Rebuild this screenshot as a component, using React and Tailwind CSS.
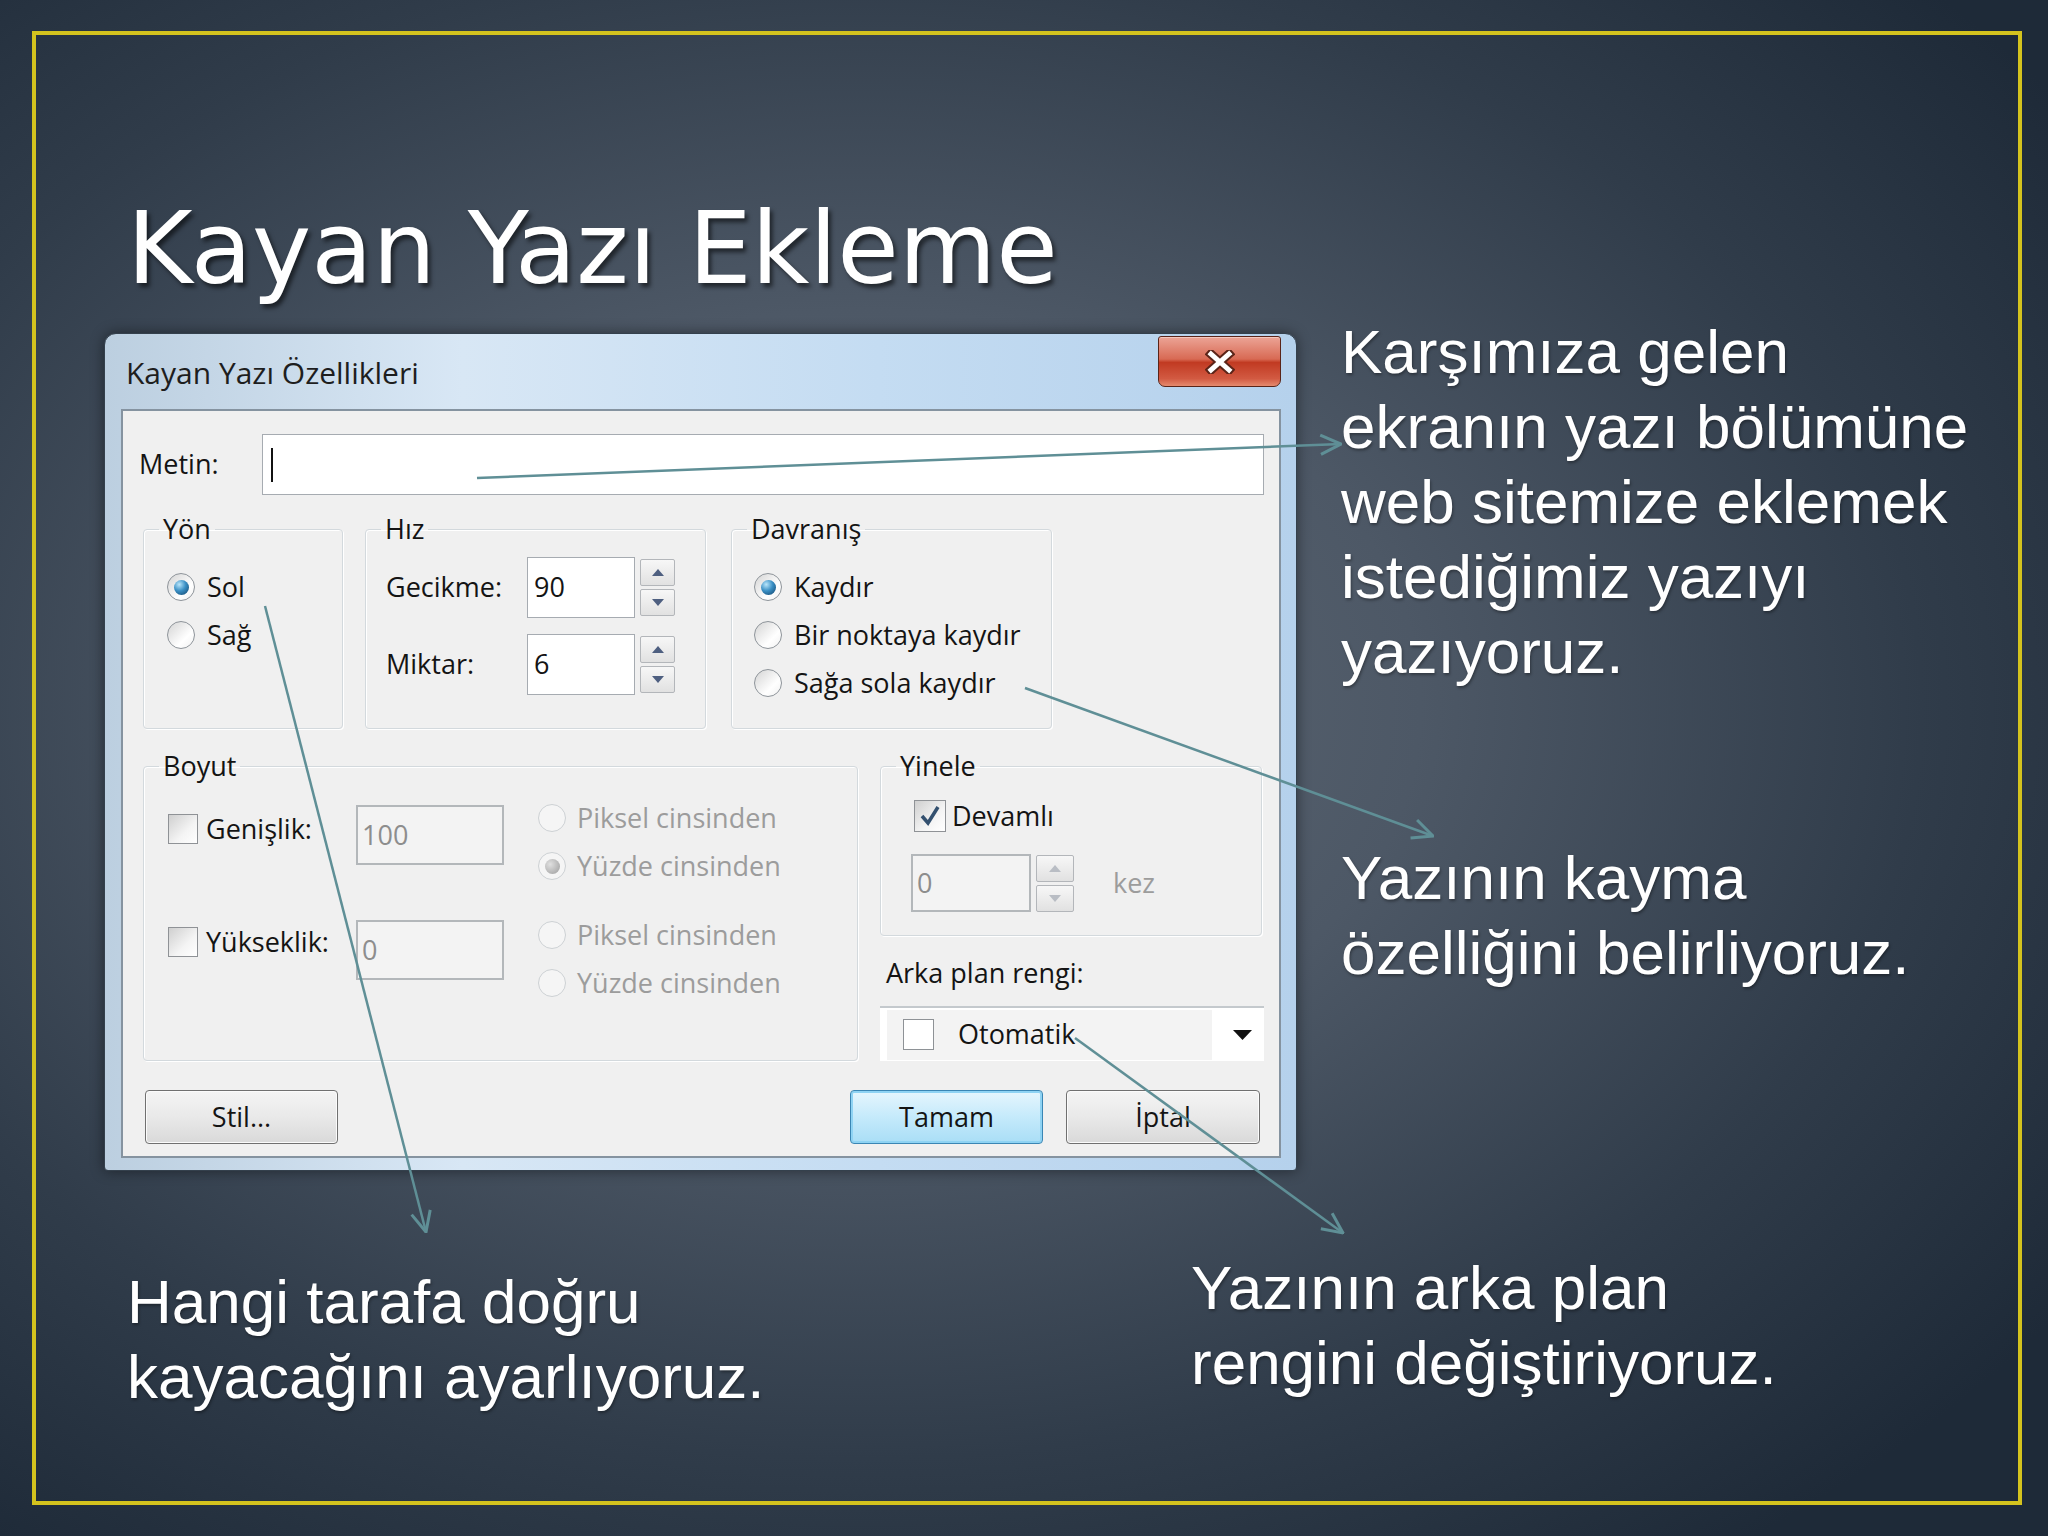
import React from "react";

const Radio = ({ label, checked, disabled, gap = "ml-[12px]" }) => (
  <div className="flex items-center h-[48px]">
    <span
      className={`w-[28px] h-[28px] rounded-full border flex items-center justify-center shrink-0 ${
        disabled
          ? "border-[#cdd1d4] bg-[#f5f5f5]"
          : "border-[#8e949a] bg-[linear-gradient(135deg,#d4d4d4,#ffffff_65%,#f0f0f0)]"
      }`}
    >
      {checked && (
        <span
          className={`w-[15px] h-[15px] rounded-full ${
            disabled
              ? "bg-[radial-gradient(circle_at_35%_35%,#e0e0e0,#9c9c9c)]"
              : "bg-[radial-gradient(circle_at_35%_30%,#b9e6fb,#3a8fc4_45%,#0f3f66)]"
          }`}
        />
      )}
    </span>
    <span className={`${gap} ${disabled ? "text-[#9c9c9c]" : "text-[#141414]"}`}>{label}</span>
  </div>
);

const Check = ({ checked, size = "w-[30px] h-[30px]" }) => (
  <span
    className={`${size} border border-[#8f9296] bg-[linear-gradient(135deg,#cfcfcf,#f4f4f4_60%,#ffffff)] flex items-center justify-center shrink-0`}
  >
    {checked && (
      <svg width="22" height="22" viewBox="0 0 22 22">
        <path d="M3 11 L9 18 L19 2" fill="none" stroke="#33506f" strokeWidth="3.5" />
      </svg>
    )}
  </span>
);

const Spinner = ({ w = "w-[35px]", disabled }) => (
  <div className="flex flex-col gap-[3px] ml-[5px]">
    {["M6 0 L12 7 L0 7 Z", "M0 0 L12 0 L6 7 Z"].map((d, i) => (
      <span
        key={i}
        className={`${w} h-[27px] border border-[#b3b6ba] rounded-[2px] bg-[linear-gradient(#f7f7f7,#e1e1e1)] flex items-center justify-center`}
      >
        <svg width="12" height="7" viewBox="0 0 12 7">
          <path d={d} fill={disabled ? "#b9bdc4" : "#4e5f80"} />
        </svg>
      </span>
    ))}
  </div>
);

// group box: legend sits on the top border, content padded inside
const Box = ({ title, className, inner, children }) => (
  <fieldset
    className={`border border-[#d3d9dd] rounded-[4px] shadow-[inset_1px_1px_0_#ffffff,1px_1px_0_#ffffff] ${className}`}
  >
    <legend className="ml-[15px] px-[4px] leading-[38px] text-[#141414]">{title}</legend>
    <div className={inner}>{children}</div>
  </fieldset>
);

const Btn = ({ children, primary, className = "" }) => (
  <div
    className={`h-[54px] rounded-[4px] border flex items-center justify-center ${
      primary
        ? "border-[#3a86b4] bg-[linear-gradient(#e6f6fd,#c5eafb_50%,#a9def6)] shadow-[inset_0_0_0_2px_#8fd3f3]"
        : "border-[#707070] bg-[linear-gradient(#f4f4f4,#e9e9e9_50%,#d9d9d9)] shadow-[inset_0_0_0_1px_#fbfbfb]"
    } ${className}`}
  >
    {children}
  </div>
);

const Dialog = () => (
  <div className="mt-[19px] ml-[68px] w-[1193px] h-[838px] rounded-t-[12px] rounded-b-[4px] border border-[#34404c] bg-[linear-gradient(90deg,#bccfe0,#d8e7f5_30%,#c4dcf2_65%,#b5d1ec)] flex flex-col shrink-0 shadow-[0_0_14px_rgba(0,0,0,0.45)] font-['Open_Sans',sans-serif] text-[27px] text-[#141414]">
    <div className="h-[75px] flex items-start shrink-0">
      <span className="ml-[21px] mt-[19px] text-[30px] leading-[40px] text-[#1e1e1e]">Kayan Yazı Özellikleri</span>
      <div className="ml-auto mr-[15px] mt-[2px] w-[123px] h-[51px] rounded-b-[7px] rounded-t-[3px] border border-[#5a2418] bg-[linear-gradient(#eca496,#d86a54_45%,#c13a22_52%,#d25a42_85%,#e58a6e)] flex items-center justify-center shadow-[inset_0_1px_0_#f5c7bd]">
        <svg width="30" height="24" viewBox="0 0 30 24">
          <path d="M6 4 L24 20 M24 4 L6 20" stroke="#5b2418" strokeWidth="9" strokeLinecap="square" />
          <path d="M6 4 L24 20 M24 4 L6 20" stroke="#ffffff" strokeWidth="5" strokeLinecap="square" />
        </svg>
      </div>
    </div>

    <div className="ml-[16px] w-[1160px] h-[749px] bg-[#f0f0f0] border-2 border-[#8593a0] flex flex-col">
      {/* metin */}
      <div className="mt-[23px] flex items-center">
        <span className="w-[139px] pl-[16px]">Metin:</span>
        <div className="w-[1002px] h-[61px] bg-white border border-[#a6abb1] flex items-center pl-[8px]">
          <span className="w-[2px] h-[34px] bg-[#111111]" />
        </div>
      </div>

      {/* row 1 */}
      <div className="mt-[15px] ml-[20px] flex items-start">
        <Box title="Yön" className="w-[200px] h-[219px]" inner="pl-[23px] pt-[15px]">
          <Radio label="Sol" checked />
          <Radio label="Sağ" />
        </Box>
        <Box title="Hız" className="ml-[22px] w-[341px] h-[219px]" inner="pl-[20px] pt-[9px] flex flex-col gap-[16px]">
          {[["Gecikme:", "90"], ["Miktar:", "6"]].map(([l, v]) => (
            <div key={l} className="flex items-center h-[61px]">
              <span className="w-[141px]">{l}</span>
              <div className="w-[108px] h-[61px] bg-white border border-[#a6abb1] flex items-center pl-[6px]">{v}</div>
              <Spinner />
            </div>
          ))}
        </Box>
        <Box title="Davranış" className="ml-[25px] w-[321px] h-[219px]" inner="pl-[22px] pt-[15px]">
          <Radio label="Kaydır" checked />
          <Radio label="Bir noktaya kaydır" />
          <Radio label="Sağa sola kaydır" />
        </Box>
      </div>

      {/* row 2 */}
      <div className="mt-[18px] ml-[20px] flex items-start">
        <Box title="Boyut" className="w-[715px] h-[314px]" inner="pl-[24px] pt-[9px]">
          {[
            ["Genişlik:", "100", true, "mt-[11px]", "mt-[11px]", ""],
            ["Yükseklik:", "0", false, "mt-[7px]", "mt-[9px]", "mt-[21px]"],
          ].map(([l, v, first, cm, im, rm]) => (
            <div key={l} className={`flex items-start ${rm}`}>
              <div className={`w-[188px] h-[48px] flex items-center ${cm}`}>
                <Check />
                <span className="ml-[8px]">{l}</span>
              </div>
              <div className={`w-[148px] h-[60px] border-2 border-[#b3b7ba] bg-[#f3f3f3] text-[#8d8d8d] flex items-center pl-[4px] ${im}`}>
                {v}
              </div>
              <div className="ml-[34px] flex flex-col">
                <Radio label="Piksel cinsinden" disabled gap="ml-[11px]" />
                <Radio label="Yüzde cinsinden" disabled checked={first} gap="ml-[11px]" />
              </div>
            </div>
          ))}
        </Box>

        <div className="ml-[22px] w-[384px] flex flex-col">
          <Box title="Yinele" className="w-[382px] h-[189px]" inner="pl-[30px] pt-[7px]">
            <div className="h-[48px] ml-[3px] flex items-center">
              <Check checked size="w-[32px] h-[32px]" />
              <span className="ml-[6px]">Devamlı</span>
            </div>
            <div className="mt-[14px] flex items-center">
              <div className="w-[120px] h-[58px] border-2 border-[#b3b7ba] bg-[#f3f3f3] text-[#8d8d8d] flex items-center pl-[4px]">0</div>
              <Spinner w="w-[38px]" disabled />
              <span className="ml-[39px] text-[#9c9c9c]">kez</span>
            </div>
          </Box>
          <span className="mt-[18px] pl-[6px] leading-[38px]">Arka plan rengi:</span>
          <div className="mt-[14px] w-[384px] h-[55px] bg-white border-t-2 border-[#c4c9cd] flex items-center">
            <div className="ml-[7px] w-[325px] h-[50px] bg-[#f3f3f3] flex items-center">
              <span className="ml-[16px] w-[31px] h-[31px] border border-[#8e9296] bg-white" />
              <span className="ml-[24px]">Otomatik</span>
            </div>
            <svg className="ml-[21px]" width="19" height="10" viewBox="0 0 19 10">
              <path d="M0 0 L19 0 L9.5 10 Z" fill="#111111" />
            </svg>
          </div>
        </div>
      </div>

      {/* buttons */}
      <div className="mt-[29px] pl-[22px] pr-[19px] flex items-center">
        <Btn className="w-[193px]">Stil...</Btn>
        <Btn primary className="ml-auto w-[193px]">Tamam</Btn>
        <Btn className="ml-[23px] w-[194px]">İptal</Btn>
      </div>
    </div>
  </div>
);

const Lines = ({ lines }) => (
  <div>
    {lines.map((t) => (
      <div key={t} className="whitespace-nowrap">{t}</div>
    ))}
  </div>
);

const Arrow = ({ x1, y1, x2, y2 }) => (
  <line x1={x1} y1={y1} x2={x2} y2={y2} stroke="#5f8f96" strokeWidth="2.5" markerEnd="url(#ah)" />
);

export default function App() {
  return (
    <div className="relative w-[2048px] h-[1536px] overflow-hidden pt-[31px] pl-[32px] bg-[radial-gradient(ellipse_72%_68%_at_42%_46%,#606a76_0%,#4d5866_38%,#303c4a_72%,#1e2a38_100%)]">
      <div className="w-[1990px] h-[1474px] border-4 border-[#d4c31e] flex flex-col">
        <h1 className="mt-[164px] ml-[91px] text-[100px] leading-[100px] text-white font-['DejaVu_Sans',sans-serif] [text-shadow:3px_4px_4px_rgba(0,0,0,0.55)]">
          Kayan Yazı Ekleme
        </h1>

        <div className="mt-[15px] flex items-start">
          <Dialog />
          <div className="ml-[44px] text-[62px] leading-[75px] text-white font-['Liberation_Sans',Arial,sans-serif] [text-shadow:1px_2px_3px_rgba(0,0,0,0.35)]">
            <Lines lines={["Karşımıza gelen", "ekranın yazı bölümüne", "web sitemize eklemek", "istediğimiz yazıyı", "yazıyoruz."]} />
            <div className="mt-[151px]">
              <Lines lines={["Yazının kayma", "özelliğini belirliyoruz."]} />
            </div>
          </div>
        </div>

        <div className="mt-[79px] flex items-start text-[62px] leading-[75px] text-white font-['Liberation_Sans',Arial,sans-serif] [text-shadow:1px_2px_3px_rgba(0,0,0,0.35)]">
          <div className="w-[1155px] pl-[91px] mt-[14px]">
            <Lines lines={["Hangi tarafa doğru", "kayacağını ayarlıyoruz."]} />
          </div>
          <Lines lines={["Yazının arka plan", "rengini değiştiriyoruz."]} />
        </div>
      </div>

      <svg className="absolute inset-0 pointer-events-none" width="2048" height="1536" viewBox="0 0 2048 1536">
        <defs>
          <marker id="ah" viewBox="0 0 20 20" refX="19" refY="10" markerWidth="24" markerHeight="24" markerUnits="userSpaceOnUse" orient="auto">
            <path d="M2 2 L19 10 L2 18" fill="none" stroke="#5f8f96" strokeWidth="2.5" />
          </marker>
        </defs>
        <Arrow x1={477} y1={478} x2={1341} y2={444} />
        <Arrow x1={265} y1={606} x2={426} y2={1232} />
        <Arrow x1={1025} y1={688} x2={1433} y2={836} />
        <Arrow x1={1075} y1={1038} x2={1343} y2={1233} />
      </svg>
    </div>
  );
}
